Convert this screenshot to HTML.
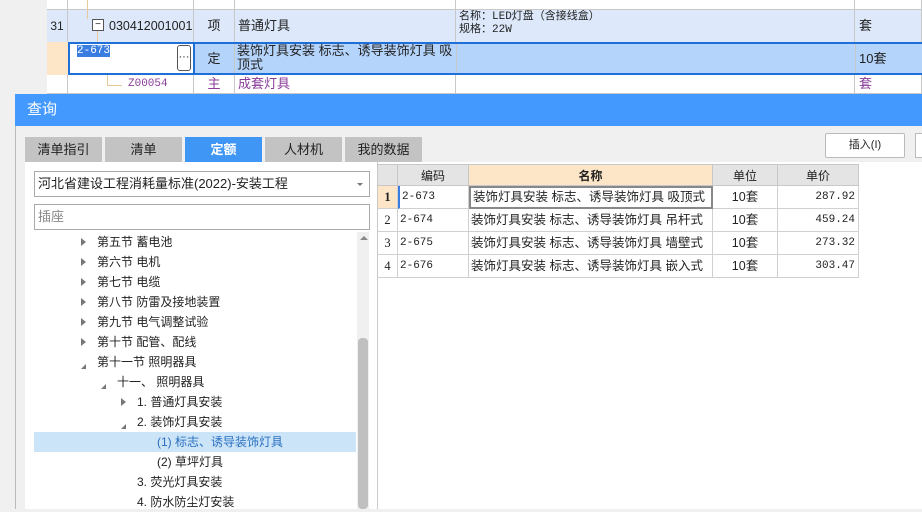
<!DOCTYPE html>
<html><head><meta charset="utf-8"><style>
*{margin:0;padding:0;box-sizing:border-box}
body{width:922px;height:509px;overflow:hidden;position:relative;background:#f0f0f0;font-family:"Liberation Sans","Noto Sans CJK SC",sans-serif;font-size:12px;color:#222}
.a{position:absolute}
.c{position:absolute;border-right:1px solid #c8c8c8;border-bottom:1px solid #c8c8c8;white-space:nowrap;overflow:hidden}
.tab{position:absolute;top:137px;height:25px;width:77px;background:#c3c3c3;text-align:center;line-height:25px;font-size:13px;color:#222}
.tr{position:absolute;left:97px;font-size:12px;height:20px;line-height:20px;white-space:nowrap}
.ar{position:absolute;width:0;height:0;border-top:4px solid transparent;border-bottom:4px solid transparent;border-left:5px solid #777}
.dn{position:absolute;width:0;height:0;border-left:5px solid transparent;border-bottom:5px solid #777}
.th{position:absolute;top:164px;height:22px;line-height:22px;text-align:center;background:#e4e4e4;border-right:1px solid #c8c8c8;border-bottom:1px solid #c8c8c8}
.td{position:absolute;height:23px;line-height:23px;border-right:1px solid #d0d0d0;border-bottom:1px solid #d0d0d0;white-space:nowrap;background:#fff;font-size:12.5px}
</style></head><body>
<div class="a" style="left:47px;top:0;width:875px;height:94px;background:#fff"></div>
<div class="c" style="left:47px;top:0;width:21px;height:10px"></div>
<div class="c" style="left:68px;top:0;width:126px;height:10px"></div>
<div class="c" style="left:194px;top:0;width:41px;height:10px"></div>
<div class="c" style="left:235px;top:0;width:221px;height:10px"></div>
<div class="c" style="left:456px;top:0;width:399px;height:10px"></div>
<div class="c" style="left:855px;top:0;width:67px;height:10px"></div>
<div class="a" style="left:47px;top:10px;width:875px;height:32px;background:#dde9fb"></div>
<div class="c" style="left:47px;top:10px;width:21px;height:33px;line-height:32px;text-align:center">31</div>
<div class="c" style="left:68px;top:10px;width:126px;height:33px;line-height:32px;padding-left:41px;font-size:12.5px">030412001001</div>
<div class="a" style="left:87px;top:0;width:1px;height:19px;background:#e8c99a"></div>
<div class="a" style="left:97px;top:31px;width:1px;height:12px;background:#e8c99a"></div>
<div class="a" style="left:92px;top:19px;width:12px;height:12px;border:1px solid #555;background:#fff;font-size:10px;line-height:9px;text-align:center">−</div>
<div class="c" style="left:194px;top:10px;width:41px;height:33px;line-height:32px;text-align:center;font-size:13px">项</div>
<div class="c" style="left:235px;top:10px;width:221px;height:33px;line-height:32px;padding-left:3px;font-size:13px">普通灯具</div>
<div class="c" style="left:456px;top:10px;width:399px;height:33px;padding:1px 0 0 3px;font-size:11px;line-height:13px;font-family:'Liberation Mono','Noto Sans CJK SC',monospace">名称：LED灯盘（含接线盒）<br>规格：22W</div>
<div class="c" style="left:855px;top:10px;width:67px;height:33px;line-height:32px;padding-left:4px;font-size:13px">套</div>
<div class="a" style="left:47px;top:42px;width:21px;height:33px;background:#fde6c8"></div>
<div class="a" style="left:68px;top:42px;width:854px;height:33px;background:#b5d4fb;border-top:2px solid #1f6fd8;border-bottom:2px solid #1f6fd8"></div>
<div class="a" style="left:68px;top:42px;width:127px;height:33px;background:#fff;border:2px solid #1f6fd8"></div>
<div class="a" style="left:77px;top:45px;background:#3a7de0;color:#fff;font-size:11px;line-height:12px;font-family:'Liberation Mono',monospace">2-673</div>
<div class="a" style="left:177px;top:45px;width:14px;height:26px;border:1px solid #555;border-radius:3px;text-align:center;line-height:22px;font-size:11px">···</div>
<div class="a" style="left:194px;top:44px;width:41px;height:29px;line-height:29px;text-align:center;font-size:13px;border-right:1px solid #c8c8c8">定</div>
<div class="a" style="left:237px;top:44px;font-size:13px;line-height:14px;width:220px">装饰灯具安装 标志、诱导装饰灯具 吸顶式</div>
<div class="a" style="left:456px;top:44px;width:1px;height:29px;background:#c8c8c8"></div>
<div class="a" style="left:855px;top:44px;width:1px;height:29px;background:#c8c8c8"></div>
<div class="a" style="left:859px;top:44px;line-height:29px;font-size:13px">10套</div>
<div class="c" style="left:47px;top:75px;width:21px;height:19px"></div>
<div class="c" style="left:68px;top:75px;width:126px;height:19px;line-height:18px;padding-left:60px;color:#8a3c9a;font-family:'Liberation Mono',monospace;font-size:11px">Z00054</div>
<div class="a" style="left:107px;top:75px;width:1px;height:10px;background:#e8c99a"></div>
<div class="a" style="left:107px;top:85px;width:15px;height:1px;background:#e8c99a"></div>
<div class="c" style="left:194px;top:75px;width:41px;height:19px;line-height:18px;text-align:center;color:#8a3c9a;font-size:13px">主</div>
<div class="c" style="left:235px;top:75px;width:221px;height:19px;line-height:18px;padding-left:3px;color:#8a3c9a;font-size:13px">成套灯具</div>
<div class="c" style="left:456px;top:75px;width:399px;height:19px"></div>
<div class="c" style="left:855px;top:75px;width:67px;height:19px;padding-left:4px;line-height:18px;color:#8a3c9a;font-size:13px">套</div>
<div class="a" style="left:15px;top:94px;width:907px;height:415px;background:#f0f0f0;border-left:1px solid #bbb"></div>
<div class="a" style="left:15px;top:94px;width:907px;height:32px;background:#4499ff;color:#fff;font-size:15px;line-height:32px;padding-left:12px">查询</div>
<div class="tab" style="left:25px">清单指引</div>
<div class="tab" style="left:105px">清单</div>
<div class="tab" style="left:185px;background:#3f96f5;color:#fff;font-weight:bold">定额</div>
<div class="tab" style="left:265px">人材机</div>
<div class="tab" style="left:345px">我的数据</div>
<div class="a" style="left:825px;top:133px;width:80px;height:25px;background:#fff;border:1px solid #bbb;border-radius:2px;text-align:center;line-height:23px;font-size:11px">插入(I)</div>
<div class="a" style="left:915px;top:133px;width:10px;height:25px;background:#fff;border:1px solid #bbb"></div>
<div class="a" style="left:25px;top:162px;width:352px;height:347px;background:#fff"></div>
<div class="a" style="left:377px;top:162px;width:545px;height:347px;background:#fff;border-left:1px solid #ccc"></div>
<div class="a" style="left:34px;top:171px;width:336px;height:26px;border:1px solid #aaa;line-height:24px;padding-left:3px;font-size:13px;background:#fff">河北省建设工程消耗量标准(2022)-安装工程</div>
<div class="a" style="left:357px;top:183px;border-left:3px solid transparent;border-right:3px solid transparent;border-top:3px solid #777"></div>
<div class="a" style="left:34px;top:204px;width:336px;height:26px;border:1px solid #aaa;line-height:24px;padding-left:3px;font-size:13px;color:#888;background:#fff">插座</div>
<div class="a" style="left:357px;top:232px;width:12px;height:277px;background:#f0f0f0"></div>
<div class="a" style="left:360px;top:236px;border-left:4px solid transparent;border-right:4px solid transparent;border-bottom:4px solid #888"></div>
<div class="a" style="left:358px;top:338px;width:10px;height:171px;background:#c0c0c0;border-radius:4px"></div>
<div class="a" style="left:34px;top:432px;width:322px;height:20px;background:#cce4f8"></div>
<div class="ar" style="left:81px;top:238px"></div><div class="tr" style="top:232px">第五节 蓄电池</div>
<div class="ar" style="left:81px;top:258px"></div><div class="tr" style="top:252px">第六节 电机</div>
<div class="ar" style="left:81px;top:278px"></div><div class="tr" style="top:272px">第七节 电缆</div>
<div class="ar" style="left:81px;top:298px"></div><div class="tr" style="top:292px">第八节 防雷及接地装置</div>
<div class="ar" style="left:81px;top:318px"></div><div class="tr" style="top:312px">第九节 电气调整试验</div>
<div class="ar" style="left:81px;top:338px"></div><div class="tr" style="top:332px">第十节 配管、配线</div>
<div class="dn" style="left:81px;top:364px"></div><div class="tr" style="top:352px">第十一节 照明器具</div>
<div class="dn" style="left:101px;top:384px"></div><div class="tr" style="top:372px;left:117px">十一、 照明器具</div>
<div class="ar" style="left:121px;top:398px"></div><div class="tr" style="top:392px;left:137px">1. 普通灯具安装</div>
<div class="dn" style="left:121px;top:424px"></div><div class="tr" style="top:412px;left:137px">2. 装饰灯具安装</div>
<div class="tr" style="top:432px;left:157px;color:#2a6fc0">(1) 标志、诱导装饰灯具</div>
<div class="tr" style="top:452px;left:157px">(2) 草坪灯具</div>
<div class="tr" style="top:472px;left:137px">3. 荧光灯具安装</div>
<div class="tr" style="top:492px;left:137px">4. 防水防尘灯安装</div>
<div class="th" style="left:377px;width:21px;border-left:1px solid #c8c8c8;border-top:1px solid #c8c8c8"></div>
<div class="th" style="left:398px;width:71px;border-top:1px solid #c8c8c8">编码</div>
<div class="th" style="left:469px;width:244px;background:#fde6c8;font-weight:bold;border-top:1px solid #c8c8c8">名称</div>
<div class="th" style="left:713px;width:65px;border-top:1px solid #c8c8c8">单位</div>
<div class="th" style="left:778px;width:81px;border-top:1px solid #c8c8c8">单价</div>
<div class="td" style="left:377px;top:186px;width:21px;text-align:center;background:#fde6c8;font-weight:bold;border-left:1px solid #c8c8c8;font-family:'Liberation Serif',serif">1</div>
<div class="td" style="left:398px;top:186px;width:71px;padding-left:2px;font-family:'Liberation Mono',monospace;font-size:11px;border-left:2px solid #3a7de0">2-673</div>
<div class="td" style="left:469px;top:186px;width:244px;padding-left:2px;border:2px solid #888;line-height:19px">装饰灯具安装 标志、诱导装饰灯具 吸顶式</div>
<div class="td" style="left:713px;top:186px;width:65px;text-align:center">10套</div>
<div class="td" style="left:778px;top:186px;width:81px;text-align:right;padding-right:3px;font-family:'Liberation Mono',monospace;font-size:11px">287.92</div>
<div class="td" style="left:377px;top:209px;width:21px;text-align:center;border-left:1px solid #c8c8c8;font-family:'Liberation Serif',serif">2</div>
<div class="td" style="left:398px;top:209px;width:71px;padding-left:2px;font-family:'Liberation Mono',monospace;font-size:11px">2-674</div>
<div class="td" style="left:469px;top:209px;width:244px;padding-left:2px">装饰灯具安装 标志、诱导装饰灯具 吊杆式</div>
<div class="td" style="left:713px;top:209px;width:65px;text-align:center">10套</div>
<div class="td" style="left:778px;top:209px;width:81px;text-align:right;padding-right:3px;font-family:'Liberation Mono',monospace;font-size:11px">459.24</div>
<div class="td" style="left:377px;top:232px;width:21px;text-align:center;border-left:1px solid #c8c8c8;font-family:'Liberation Serif',serif">3</div>
<div class="td" style="left:398px;top:232px;width:71px;padding-left:2px;font-family:'Liberation Mono',monospace;font-size:11px">2-675</div>
<div class="td" style="left:469px;top:232px;width:244px;padding-left:2px">装饰灯具安装 标志、诱导装饰灯具 墙壁式</div>
<div class="td" style="left:713px;top:232px;width:65px;text-align:center">10套</div>
<div class="td" style="left:778px;top:232px;width:81px;text-align:right;padding-right:3px;font-family:'Liberation Mono',monospace;font-size:11px">273.32</div>
<div class="td" style="left:377px;top:255px;width:21px;text-align:center;border-left:1px solid #c8c8c8;font-family:'Liberation Serif',serif">4</div>
<div class="td" style="left:398px;top:255px;width:71px;padding-left:2px;font-family:'Liberation Mono',monospace;font-size:11px">2-676</div>
<div class="td" style="left:469px;top:255px;width:244px;padding-left:2px">装饰灯具安装 标志、诱导装饰灯具 嵌入式</div>
<div class="td" style="left:713px;top:255px;width:65px;text-align:center">10套</div>
<div class="td" style="left:778px;top:255px;width:81px;text-align:right;padding-right:3px;font-family:'Liberation Mono',monospace;font-size:11px">303.47</div>
</body></html>
